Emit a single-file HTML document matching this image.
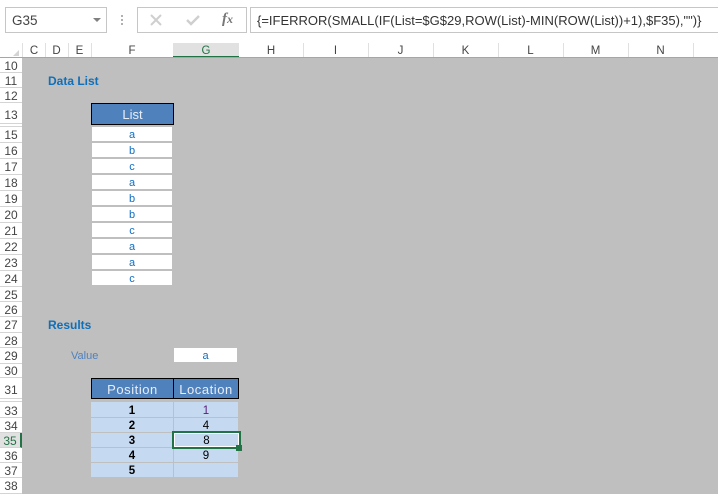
<!DOCTYPE html>
<html><head><meta charset="utf-8"><style>
html,body{margin:0;padding:0;background:#fff}
#p{position:relative;width:718px;height:494px;overflow:hidden;background:#fff;font-family:"Liberation Sans",sans-serif}
#p div{position:absolute;box-sizing:border-box;white-space:nowrap}
.ch{top:44px;height:14px;line-height:14px;text-align:center;font-size:11.5px;color:#444}
.cs{top:43px;width:1px;height:14px;background:#e0e0e0}
.rh{left:0;width:22px;text-align:center;font-size:12px;color:#444;background:#fff;border-bottom:1px solid #d4d4d4;padding-top:1px}
.w{background:#fff;left:92px;width:80px;height:14px;line-height:14px;padding-top:1px;text-align:center;font-size:11px;color:#0f6fc6}
.hd{background:#4f81bd;color:#e8eef6;text-align:center;font-size:13px;border:1px solid #000;padding-top:1px}
.c{background:#c5d9f1;text-align:center;font-size:11.5px;color:#000;line-height:14px;height:14px;padding-top:1px}
</style></head><body><div id="p">
<div style="left:5px;top:7px;width:102px;height:26px;border:1px solid #c6c6c6;font-size:13.5px;line-height:25px;padding-left:6px;color:#444">G35</div>
<div style="left:93px;top:18px;width:0;height:0;border-left:4px solid transparent;border-right:4px solid transparent;border-top:4px solid #808080"></div>
<div style="left:121px;top:15px;width:2px;height:2px;background:#b0b0b0"></div>
<div style="left:121px;top:19px;width:2px;height:2px;background:#b0b0b0"></div>
<div style="left:121px;top:23px;width:2px;height:2px;background:#b0b0b0"></div>
<div style="left:137px;top:7px;width:110px;height:26px;border:1px solid #c6c6c6"></div>
<svg style="position:absolute;left:149px;top:14px" width="14" height="12"><path d="M2 1L12 11M12 1L2 11" stroke="#cfcfcf" stroke-width="2" fill="none"/></svg>
<svg style="position:absolute;left:185px;top:14px" width="16" height="12"><path d="M2 6L6 10L14 2" stroke="#cfcfcf" stroke-width="2.4" fill="none"/></svg>
<div style="left:222px;top:11px;font:italic bold 15px 'Liberation Serif',serif;color:#777">f<span style="font-size:12px">x</span></div>
<div style="left:250px;top:7px;width:468px;height:26px;border:1px solid #c6c6c6;border-right:0;font-size:13px;line-height:25px;padding-left:6px;color:#333">{=IFERROR(SMALL(IF(List=$G$29,ROW(List)-MIN(ROW(List))+1),$F35),"")}</div>

<div style="left:13px;top:50px;width:0;height:0;border-left:6px solid transparent;border-bottom:6px solid #d4d4d4"></div>
<div class="ch" style="left:22px;width:24px">C</div><div class="ch" style="left:45px;width:23px">D</div><div class="ch" style="left:68px;width:23px">E</div><div class="ch" style="left:91px;width:82px">F</div>
<div style="left:173px;top:43px;width:66px;height:15px;background:#e1e1e1;border-bottom:2px solid #217346;text-align:center;font-size:11.5px;line-height:16px;color:#217346">G</div>
<div class="ch" style="left:239px;width:64px">H</div><div class="ch" style="left:303px;width:65px">I</div><div class="ch" style="left:368px;width:65px">J</div><div class="ch" style="left:433px;width:65px">K</div><div class="ch" style="left:498px;width:65px">L</div><div class="ch" style="left:563px;width:65px">M</div><div class="ch" style="left:628px;width:65px">N</div>
<div class="cs" style="left:22px"></div><div class="cs" style="left:45px"></div><div class="cs" style="left:68px"></div><div class="cs" style="left:91px"></div><div class="cs" style="left:303px"></div><div class="cs" style="left:368px"></div><div class="cs" style="left:433px"></div><div class="cs" style="left:498px"></div><div class="cs" style="left:563px"></div><div class="cs" style="left:628px"></div><div class="cs" style="left:693px"></div>

<div style="left:0;top:57px;width:718px;height:437px;background:#bfbfbf"></div>
<div style="left:0;top:57px;width:718px;height:1px;background:#a6a6a6"></div>

<div class="rh" style="top:58px;height:15px;line-height:14px">10</div>
<div class="rh" style="top:73px;height:15px;line-height:15px">11</div>
<div class="rh" style="top:88px;height:15px;line-height:14px">12</div>
<div class="rh" style="top:103px;height:21px;line-height:23px">13</div>
<div class="rh" style="top:124px;height:3px;padding:0"></div>
<div class="rh" style="top:127px;height:16px;line-height:14px">15</div>
<div class="rh" style="top:143px;height:16px;line-height:14px">16</div>
<div class="rh" style="top:159px;height:16px;line-height:14px">17</div>
<div class="rh" style="top:175px;height:16px;line-height:14px">18</div>
<div class="rh" style="top:191px;height:16px;line-height:14px">19</div>
<div class="rh" style="top:207px;height:16px;line-height:14px">20</div>
<div class="rh" style="top:223px;height:16px;line-height:14px">21</div>
<div class="rh" style="top:239px;height:16px;line-height:14px">22</div>
<div class="rh" style="top:255px;height:16px;line-height:14px">23</div>
<div class="rh" style="top:271px;height:16px;line-height:14px">24</div>
<div class="rh" style="top:287px;height:15px;line-height:14px">25</div>
<div class="rh" style="top:302px;height:15px;line-height:14px">26</div>
<div class="rh" style="top:317px;height:16px;line-height:15px">27</div>
<div class="rh" style="top:333px;height:15px;line-height:14px">28</div>
<div class="rh" style="top:348px;height:16px;line-height:14px">29</div>
<div class="rh" style="top:364px;height:14px;line-height:13px">30</div>
<div class="rh" style="top:378px;height:21px;line-height:23px">31</div>
<div class="rh" style="top:399px;height:3px;padding:0"></div>
<div class="rh" style="top:402px;height:16px;line-height:16px">33</div>
<div class="rh" style="top:418px;height:15px;line-height:14px">34</div>
<div class="rh" style="top:433px;height:15px;line-height:14px;background:#e1e1e1;color:#217346;border-right:2px solid #217346">35</div>
<div class="rh" style="top:448px;height:15px;line-height:14px">36</div>
<div class="rh" style="top:463px;height:15px;line-height:14px">37</div>
<div class="rh" style="top:478px;height:16px;line-height:14px">38</div>

<div style="left:48px;top:74px;font-size:12px;font-weight:bold;color:#0f6fb8">Data List</div>
<div class="hd" style="left:91px;top:103px;width:83px;height:22px;line-height:21px;padding-top:0">List</div>
<div class="w" style="top:127px">a</div><div class="w" style="top:143px">b</div><div class="w" style="top:159px">c</div><div class="w" style="top:175px">a</div><div class="w" style="top:191px">b</div><div class="w" style="top:207px">b</div><div class="w" style="top:223px">c</div><div class="w" style="top:239px">a</div><div class="w" style="top:255px">a</div><div class="w" style="top:271px">c</div>

<div style="left:48px;top:318px;font-size:12px;font-weight:bold;color:#0f6fb8">Results</div>
<div style="left:71px;top:349px;font-size:11px;line-height:14px;color:#4f81bd">Value</div>
<div class="w" style="left:174px;width:63px;top:348px">a</div>

<div class="hd" style="left:91px;top:378px;width:83px;height:21px;line-height:20px;letter-spacing:.55px">Position</div>
<div class="hd" style="left:173px;top:378px;width:66px;height:21px;line-height:20px;letter-spacing:.55px">Location</div>

<div class="c" style="left:91px;width:82px;top:402px;height:15px;font-weight:bold;line-height:16px">1</div><div class="c" style="left:174px;width:64px;top:402px;height:15px;color:#5a1a7a;line-height:16px">1</div>
<div class="c" style="left:91px;width:82px;top:418px;font-weight:bold">2</div><div class="c" style="left:174px;width:64px;top:418px">4</div>
<div class="c" style="left:91px;width:82px;top:433px;font-weight:bold">3</div>
<div class="c" style="left:91px;width:82px;top:448px;font-weight:bold">4</div><div class="c" style="left:174px;width:64px;top:448px">9</div>
<div class="c" style="left:91px;width:82px;top:463px;font-weight:bold">5</div><div class="c" style="left:174px;width:64px;top:463px"></div>

<div style="left:172px;top:431px;width:69px;height:18px;border:2px solid #217346;background:#c5d9f1"></div>
<div style="left:174px;top:433px;width:65px;height:14px;border:1px solid #fff;text-align:center;font-size:11.5px;line-height:14px;color:#000">8</div>
<div style="left:236px;top:445px;width:6px;height:6px;background:#217346;border:0"></div>
</div></body></html>
